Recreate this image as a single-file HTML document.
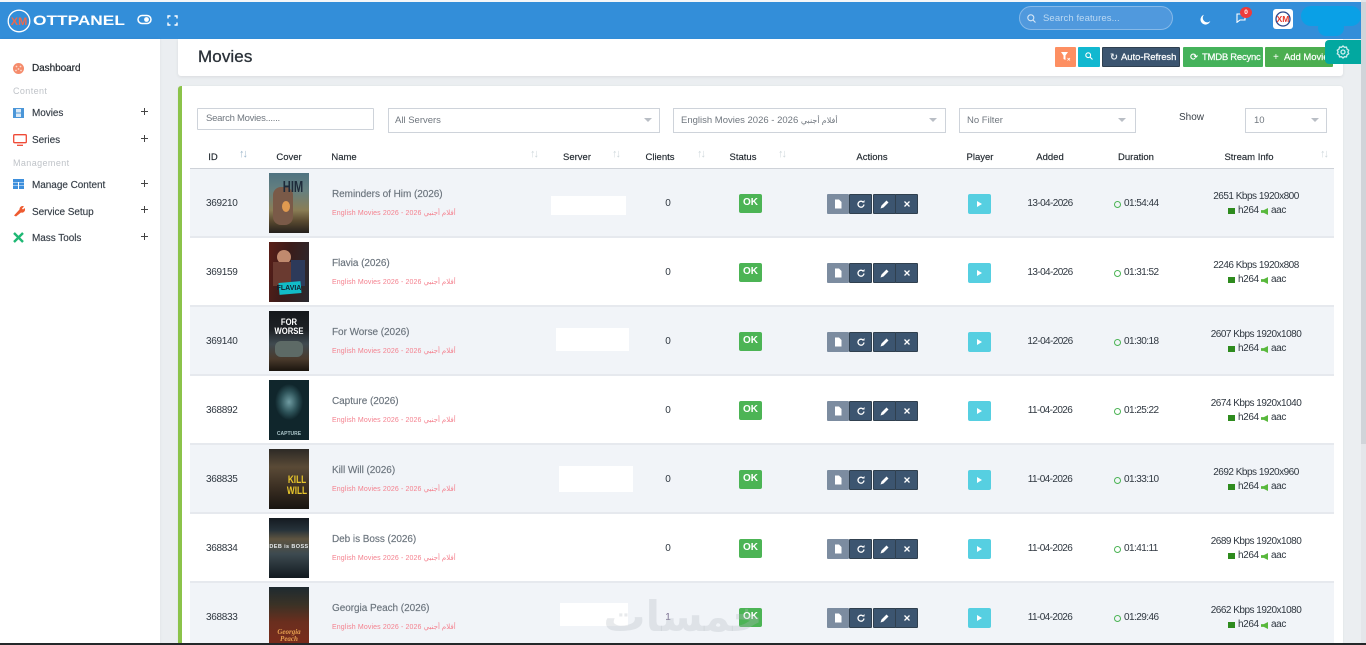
<!DOCTYPE html>
<html><head><meta charset="utf-8"><title>Movies</title>
<style>
*{box-sizing:border-box}
html,body{margin:0;padding:0;width:1366px;height:645px;overflow:hidden;background:#ebeef1;font-family:"Liberation Sans","DejaVu Sans",sans-serif;color:#2f3740}
.a,.a *{position:absolute}
.a{position:absolute}
.t{white-space:nowrap;font-size:10px;line-height:14px}
.nav{font-size:10px;color:#353d46;letter-spacing:-.05px;line-height:14px;white-space:nowrap;position:absolute;left:32px;margin-top:1px;-webkit-text-stroke:.15px #353d46}
.sec{font-size:9px;color:#bfc3c8;letter-spacing:.4px;position:absolute;left:13px;line-height:12px}
.plus{position:absolute;left:141px;width:7px;height:7px;background:linear-gradient(#444,#444) center/7px 1px no-repeat,linear-gradient(#444,#444) center/1px 7px no-repeat}
.inp{background:#fff;border:1px solid #ced3da;font-size:9.5px;color:#70777f;line-height:24px;padding-left:7px;white-space:nowrap}
.arr{width:0;height:0;border-left:4.5px solid transparent;border-right:4.5px solid transparent;border-top:4.5px solid #b9bec5}
.th{font-size:9.5px;color:#1f262d;line-height:14px;white-space:nowrap;top:151px;transform:translateX(-50%);-webkit-text-stroke:.15px #1f262d}
.sort{font-size:11px;color:#cfd8dc;top:148px;line-height:12px;letter-spacing:-2px}
.r{left:190px;width:1144px;height:69px;border-bottom:2px solid #e6e9ee;background:#fff}
.r.o{background:#f1f4f8}
.id{left:16px;top:28px;font-size:10px;line-height:14px;color:#2f3740;letter-spacing:-.3px}
.po{left:79px;top:4px;width:40px;height:60px;overflow:hidden}
.po b{font-family:"Liberation Sans",sans-serif;text-align:center;width:40px;left:0;line-height:1}
.nm{left:142px;top:19px;font-size:10px;line-height:14px;color:#6b747d;white-space:nowrap;letter-spacing:-.05px;-webkit-text-stroke:.15px #6b747d}
.ct{left:142px;top:39px;font-size:7px;line-height:12px;color:#f4828f;white-space:nowrap;letter-spacing:.12px}
.cl{left:474px;width:8px;top:28px;font-size:10px;line-height:14px;text-align:center}
.ok{left:549px;top:25px;width:23px;height:19px;background:#4cb455;border-radius:2px;color:#fff;font-size:10px;font-weight:bold;text-align:center;line-height:18px}
.b{top:25px;height:20px;background:#3c5570;border:1px solid #30404f;border-radius:1px}
.b svg{left:50%;top:50%;transform:translate(-50%,-50%)}
.b1{left:637px;width:22px;background:#7c8ca0;border-color:#7c8ca0}
.b2{left:659px;width:23px}
.b3{left:683px;width:23px}
.b4{left:705px;width:23px}
.pl{left:778px;top:25px;width:23px;height:20px;background:#56cfe1;border-radius:2px}
.pl i{left:9px;top:7px;width:0;height:0;border-left:5px solid #fff;border-top:3px solid transparent;border-bottom:3px solid transparent}
.ad{left:860px;width:0;top:28px;font-size:10px;line-height:14px;white-space:nowrap;display:flex;justify-content:center;letter-spacing:-.6px}
.du{left:924px;top:28px;font-size:10px;line-height:14px;white-space:nowrap;padding-left:10px;letter-spacing:-.55px}
.du i{left:0;top:4px;width:7px;height:7px;border:1px solid #4cb455;border-radius:50%}
.s1{left:1066px;width:0;top:21px;font-size:10px;line-height:14px;white-space:nowrap;display:flex;justify-content:center;letter-spacing:-.5px}
.s2{left:1038px;top:35px;font-size:10px;line-height:14px;white-space:nowrap;padding-left:10px;letter-spacing:-.4px}
.s2 i{left:0;top:4px;width:7px;height:6px;background:#2e8b1e}
.s2 em{left:33px;top:4px;width:7px;height:7px;background:#58b83c;clip-path:polygon(0 30%,40% 30%,100% 0,100% 100%,40% 70%,0 70%)}
.s2 u{left:43px;text-decoration:none;top:0}
.w{background:#fff}
.bt{font-size:9.5px;color:#fff;letter-spacing:-.05px;-webkit-text-stroke:.2px #fff;top:51px}
</style></head><body>
<div class="a" style="left:0;top:0;width:1366px;height:2px;background:#f4f6f8"></div>
<div class="a" style="left:0;top:2px;width:1361px;height:37px;background:#338ed9"></div>
<div class="a" style="left:1361px;top:0;width:5px;height:645px;background:#e4e6ea"></div>
<div class="a" style="left:1361px;top:2px;width:5px;height:442px;background:#d0d4d9"></div>

<svg class="a" style="left:7px;top:9px" width="24" height="24" viewBox="0 0 24 24"><circle cx="12" cy="12" r="10.800" fill="none" stroke="#fff" stroke-width="1.300"/><text x="12" y="16" text-anchor="middle" font-family="Liberation Sans" font-size="11" fill="#f0684a" font-weight="bold">XM</text></svg>
<div class="a t" style="left:33px;top:10px;font-size:14px;line-height:20px;font-weight:bold;color:#fff;letter-spacing:0;transform:scaleX(1.235);transform-origin:left">OTTPANEL</div>
<svg class="a" style="left:137px;top:14px" width="15" height="11" viewBox="0 0 15 11"><rect x="1" y="1.500" width="13" height="8" rx="4" fill="none" stroke="#fff" stroke-width="1.500"/><circle cx="9.500" cy="5.500" r="2.400" fill="#fff"/></svg>
<svg class="a" style="left:167px;top:15px" width="11" height="11" viewBox="0 0 11 11" fill="none" stroke="#fff" stroke-width="1.400"><path d="M1 3.500V1h2.500M7.500 1H10v2.500M10 7.500V10H7.500M3.500 10H1V7.500"/></svg>

<div class="a" style="left:1019px;top:6px;width:154px;height:24px;background:#5099dd;border:1px solid #86b9e8;border-radius:12px"></div>
<svg class="a" style="left:1027px;top:14px" width="9" height="9" viewBox="0 0 9 9" fill="none" stroke="#d5e6f6" stroke-width="1.100"><circle cx="3.800" cy="3.800" r="3"/><path d="M6 6l2.500 2.500"/></svg>
<div class="a t" style="left:1043px;top:12px;font-size:9.500px;color:#bcd9f3;letter-spacing:.1px">Search features...</div>
<svg class="a" style="left:1200px;top:14px" width="11" height="11" viewBox="0 0 11 11"><path d="M4 .8A5 5 0 1 0 10.300 7 4.300 4.300 0 0 1 4 .8z" fill="#fff"/></svg>
<svg class="a" style="left:1236px;top:13px" width="10" height="10" viewBox="0 0 10 10" fill="none" stroke="#fff" stroke-width="1.100"><path d="M1 1h8v6H4L1 9.300z"/></svg>
<div class="a" style="left:1240px;top:7px;width:12px;height:11px;background:#ee3b3b;border-radius:50%;color:#fff;font-size:6.500px;font-weight:bold;text-align:center;line-height:11px">0</div>
<div class="a" style="left:1273px;top:9px;width:20px;height:20px;background:#fff;border-radius:3px"></div>
<svg class="a" style="left:1273px;top:9px" width="20" height="20" viewBox="0 0 20 20"><circle cx="10" cy="10" r="7" fill="none" stroke="#29458c" stroke-width="1.300"/><text x="10" y="13" text-anchor="middle" font-family="Liberation Sans" font-size="8.500" font-weight="bold" fill="#e8392c">XM</text></svg>
<div class="a" style="left:1301px;top:6px;width:60px;height:20px;background:#0aa0e6;border-radius:10px"></div>
<div class="a" style="left:1318px;top:20px;width:26px;height:16px;background:#0aa0e6;border-radius:8px"></div>

<div class="a w" style="left:0;top:39px;width:160px;height:606px;box-shadow:0 0 3px rgba(0,0,0,.06)"></div>
<svg class="a" style="left:13px;top:63px" width="11" height="11" viewBox="0 0 11 11"><circle cx="5.500" cy="5.500" r="5.500" fill="#f58b6b"/><circle cx="3.500" cy="3.500" r=".9" fill="#fcd9cc"/><circle cx="7.500" cy="3.500" r=".9" fill="#fcd9cc"/><circle cx="5.500" cy="6" r=".9" fill="#fcd9cc"/><circle cx="3" cy="7.500" r=".9" fill="#fcd9cc"/><circle cx="8" cy="7.500" r=".9" fill="#fcd9cc"/></svg>
<div class="nav" style="top:61px;color:#23292f;-webkit-text-stroke:.2px #23292f">Dashboard</div>
<div class="sec" style="top:85px">Content</div>
<svg class="a" style="left:13px;top:108px" width="11" height="10" viewBox="0 0 11 10"><rect width="11" height="10" fill="#4b96d8"/><rect x="3" y="1" width="5" height="3.500" fill="#dbe9f6"/><rect x="3" y="5.500" width="5" height="3.500" fill="#dbe9f6"/></svg>
<div class="nav" style="top:106px">Movies</div><div class="plus" style="top:108px"></div>
<svg class="a" style="left:13px;top:134px" width="14" height="12" viewBox="0 0 14 12" fill="none" stroke="#ef4a36" stroke-width="1.300"><rect x=".7" y=".7" width="12.600" height="8" rx="1"/><path d="M4 11.300h6"/></svg>
<div class="nav" style="top:133px">Series</div><div class="plus" style="top:135px"></div>
<div class="sec" style="top:157px">Management</div>
<svg class="a" style="left:13px;top:179px" width="11" height="10" viewBox="0 0 11 10" fill="#3d8fdc"><rect width="11" height="3"/><rect y="3.500" width="5" height="3"/><rect x="6" y="3.500" width="5" height="3"/><rect y="7" width="5" height="3"/><rect x="6" y="7" width="5" height="3"/></svg>
<div class="nav" style="top:178px">Manage Content</div><div class="plus" style="top:180px"></div>
<svg class="a" style="left:13px;top:205px" width="12" height="12" viewBox="0 0 12 12"><path d="M1 10.500L6.500 4.500A3 3 0 0 1 11 1.500L9 3.500l1 1 1.500-1.500A3 3 0 0 1 8 7.500L3 11.500z" fill="#ee5b30"/></svg>
<div class="nav" style="top:205px">Service Setup</div><div class="plus" style="top:206px"></div>
<svg class="a" style="left:13px;top:232px" width="11" height="11" viewBox="0 0 11 11" fill="none" stroke="#1fb874" stroke-width="2.400"><path d="M1 1l9 9M10 1L1 10"/></svg>
<div class="nav" style="top:231px">Mass Tools</div><div class="plus" style="top:233px"></div>

<div class="a w" style="left:178px;top:39px;width:1165px;height:37px;box-shadow:0 1px 3px rgba(0,0,0,.08);border-radius:0 0 3px 3px"></div>
<div class="a t" style="left:198px;top:46px;font-size:17px;line-height:22px;color:#2a3138;letter-spacing:.1px;-webkit-text-stroke:.3px #2a3138">Movies</div>
<div class="a" style="left:1055px;top:47px;width:21px;height:20px;background:#fd8f62;border-radius:1px"></div>
<svg class="a" style="left:1061px;top:52px" width="10" height="9" viewBox="0 0 10 9"><path d="M0 0h7L4.500 3.500V8L2.500 7V3.500z" fill="#fff"/><path d="M6.500 6l2.500 2.500M9 6L6.500 8.500" stroke="#fff" stroke-width=".8"/></svg>
<div class="a" style="left:1078px;top:47px;width:22px;height:20px;background:#12b8d0;border-radius:1px"></div>
<svg class="a" style="left:1085px;top:52px" width="8" height="8" viewBox="0 0 8 8" fill="none" stroke="#fff" stroke-width="1.100"><circle cx="3.200" cy="3.200" r="2.400"/><path d="M5 5l2.500 2.500"/></svg>
<div class="a" style="left:1102px;top:47px;width:78px;height:20px;background:#3c5570;border:1px solid #2f4050;border-radius:1px"></div>
<div class="a" style="left:1183px;top:47px;width:80px;height:20px;background:#45b25b;border-radius:1px"></div>
<div class="a" style="left:1265px;top:47px;width:68px;height:20px;background:#4cae50;border-radius:1px"></div>
<div class="a t" style="left:1110px;top:51px;font-size:9.500px;color:#e8edf2;font-weight:bold">&#8635;</div>
<div class="a t bt" style="left:1121px">Auto-Refresh</div>
<div class="a t" style="left:1190px;top:51px;font-size:9.500px;color:#fff;font-weight:bold">&#10227;</div>
<div class="a t bt" style="left:1202px;letter-spacing:-.25px">TMDB Recync</div>
<div class="a t" style="left:1273px;top:51px;font-size:10px;color:#fff">+</div>
<div class="a t bt" style="left:1284px">Add Movie</div>
<div class="a" style="left:1325px;top:40px;width:36px;height:24px;background:#02a8a0;border-radius:4px 0 0 4px"></div>
<svg class="a" style="left:1336px;top:45px" width="14" height="14" viewBox="0 0 14 14" fill="none" stroke="#cfeeee" stroke-width="1.300"><path d="M7 1l1.500 1.300 2-.2.500 2 1.700 1.100-.8 1.800.8 1.800-1.700 1.100-.5 2-2-.2L7 13l-1.500-1.300-2 .2-.5-2L1.300 8.800l.8-1.800-.8-1.800L3 4.100l.5-2 2 .2z"/><circle cx="7" cy="7" r="2"/></svg>

<div class="a w" style="left:178px;top:86px;width:1165px;height:559px;border-radius:3px;box-shadow:0 0 2px rgba(0,0,0,.06)"></div>
<div class="a" style="left:178px;top:86px;width:4px;height:559px;background:#8bc34a;border-radius:3px 0 0 0"></div>

<div class="a inp" style="left:197px;top:108px;width:177px;height:22px;line-height:20px;border-radius:1px;padding-left:8px;letter-spacing:-.25px">Search Movies......</div>
<div class="a inp" style="left:388px;top:108px;width:272px;height:25px;padding-left:6px">All Servers</div><div class="a arr" style="left:644px;top:118px"></div>
<div class="a inp" style="left:673px;top:108px;width:273px;height:25px">English Movies 2026 - 2026 <span style="position:static;font-size:8px">أفلام أجنبي</span></div><div class="a arr" style="left:929px;top:118px"></div>
<div class="a inp" style="left:959px;top:108px;width:177px;height:25px">No Filter</div><div class="a arr" style="left:1118px;top:118px"></div>
<div class="a t" style="left:1179px;top:111px;font-size:10px;color:#3a4149">Show</div>
<div class="a inp" style="left:1245px;top:108px;width:82px;height:25px;padding-left:8px">10</div><div class="a arr" style="left:1311px;top:118px"></div>

<div class="a" style="left:0;top:0;width:1366px;height:645px">
<div class="th" style="left:213px">ID</div><div class="sort" style="left:239px;color:#9fb8cc">↑↓</div>
<div class="th" style="left:289px">Cover</div>
<div class="th" style="left:344px">Name</div><div class="sort" style="left:530px">↑↓</div>
<div class="th" style="left:577px">Server</div><div class="sort" style="left:612px">↑↓</div>
<div class="th" style="left:660px">Clients</div><div class="sort" style="left:697px">↑↓</div>
<div class="th" style="left:743px">Status</div><div class="sort" style="left:778px">↑↓</div>
<div class="th" style="left:872px">Actions</div>
<div class="th" style="left:980px">Player</div>
<div class="th" style="left:1050px">Added</div>
<div class="th" style="left:1136px">Duration</div>
<div class="th" style="left:1249px">Stream Info</div><div class="sort" style="left:1320px">↑↓</div>
</div>
<div class="a" style="left:190px;top:168px;width:1144px;height:2px;background:#ced2d8"></div>

<svg width="0" height="0" style="position:absolute"><defs>
<symbol id="doc" viewBox="0 0 8 9"><path d="M1 0h4l2.500 2.500V9H1z" fill="#fff"/></symbol>
<symbol id="ref" viewBox="0 0 8 8"><path d="M6.500 2.500A3 3 0 1 0 7 4.500" fill="none" stroke="#fff" stroke-width="1.300"/><path d="M5 2.500h2.500V0z" fill="#fff"/></symbol>
<symbol id="pen" viewBox="0 0 9 9"><path d="M0 9l1-3 5-5 2 2-5 5z" fill="#fff"/></symbol>
<symbol id="x" viewBox="0 0 7 7"><path d="M1 1l5 5M6 1L1 6" stroke="#fff" stroke-width="1.300"/></symbol>
</defs></svg>

<!-- row 1 -->
<div class="a r o" style="top:169px">
<div class="id">369210</div>
<div class="po" style="background:linear-gradient(#4f7381 0%,#66807f 30%,#8a7d55 62%,#5a4a30 80%,#241f1c 100%)"><div style="left:4px;top:14px;width:20px;height:38px;background:#7a5a48;border-radius:8px"></div><div style="left:13px;top:28px;width:8px;height:11px;background:#e09a50;border-radius:50%"></div><b style="top:7px;left:4px;font-size:16px;color:#1d2a3a;transform:scaleX(.7)">HIM</b></div>
<div class="nm">Reminders of Him (2026)</div><div class="ct">English Movies 2026 - 2026 أفلام أجنبي</div>
<div style="left:361px;top:27px;width:75px;height:19px;background:#fff"></div>
<div class="cl">0</div><div class="ok">OK</div>
<div class="b b1"><svg width="8" height="9"><use href="#doc"/></svg></div><div class="b b2"><svg width="8" height="8"><use href="#ref"/></svg></div><div class="b b3"><svg width="9" height="9"><use href="#pen"/></svg></div><div class="b b4"><svg width="7" height="7"><use href="#x"/></svg></div>
<div class="pl"><i></i></div>
<div class="ad"><span>13-04-2026</span></div><div class="du"><i></i>01:54:44</div>
<div class="s1"><span>2651 Kbps 1920x800</span></div><div class="s2"><i></i>h264<em></em><u>aac</u></div>
</div>
<!-- row 2 -->
<div class="a r" style="top:238px">
<div class="id">369159</div>
<div class="po" style="background:linear-gradient(100deg,#5a1e18 0%,#3a1c1a 45%,#2a2a30 100%)"><div style="left:8px;top:8px;width:14px;height:14px;background:#c08a6e;border-radius:50%"></div><div style="left:4px;top:20px;width:18px;height:24px;background:#6a3a30"></div><div style="left:22px;top:18px;width:14px;height:26px;background:#2d3a5a"></div><div style="left:10px;top:40px;width:22px;height:12px;background:#12bcc8;transform:rotate(-5deg)"></div><b style="top:43px;font-size:7px;color:#123">FLAVIA</b></div>
<div class="nm">Flavia (2026)</div><div class="ct">English Movies 2026 - 2026 أفلام أجنبي</div>
<div class="cl">0</div><div class="ok">OK</div>
<div class="b b1"><svg width="8" height="9"><use href="#doc"/></svg></div><div class="b b2"><svg width="8" height="8"><use href="#ref"/></svg></div><div class="b b3"><svg width="9" height="9"><use href="#pen"/></svg></div><div class="b b4"><svg width="7" height="7"><use href="#x"/></svg></div>
<div class="pl"><i></i></div>
<div class="ad"><span>13-04-2026</span></div><div class="du"><i></i>01:31:52</div>
<div class="s1"><span>2246 Kbps 1920x808</span></div><div class="s2"><i></i>h264<em></em><u>aac</u></div>
</div>
<!-- row 3 -->
<div class="a r o" style="top:307px">
<div class="id">369140</div>
<div class="po" style="background:linear-gradient(#15181c 0%,#1d2024 30%,#3f4a50 55%,#4a3a2c 80%,#1a140e 100%)"><b style="top:7px;font-size:9px;color:#fff;transform:scaleX(.85)">FOR<br>WORSE</b><div style="left:6px;top:30px;width:28px;height:16px;background:#5d6a66;border-radius:6px"></div></div>
<div class="nm">For Worse (2026)</div><div class="ct">English Movies 2026 - 2026 أفلام أجنبي</div>
<div style="left:366px;top:21px;width:73px;height:23px;background:#fff"></div>
<div class="cl">0</div><div class="ok">OK</div>
<div class="b b1"><svg width="8" height="9"><use href="#doc"/></svg></div><div class="b b2"><svg width="8" height="8"><use href="#ref"/></svg></div><div class="b b3"><svg width="9" height="9"><use href="#pen"/></svg></div><div class="b b4"><svg width="7" height="7"><use href="#x"/></svg></div>
<div class="pl"><i></i></div>
<div class="ad"><span>12-04-2026</span></div><div class="du"><i></i>01:30:18</div>
<div class="s1"><span>2607 Kbps 1920x1080</span></div><div class="s2"><i></i>h264<em></em><u>aac</u></div>
</div>
<!-- row 4 -->
<div class="a r" style="top:376px">
<div class="id">368892</div>
<div class="po" style="background:radial-gradient(ellipse 14px 18px at 20px 22px,#6f9ca2 0%,#2d5258 60%,#10262c 100%) #0e2228"><b style="top:52px;font-size:5px;color:#a9c4c8">CAPTURE</b></div>
<div class="nm">Capture (2026)</div><div class="ct">English Movies 2026 - 2026 أفلام أجنبي</div>
<div class="cl">0</div><div class="ok">OK</div>
<div class="b b1"><svg width="8" height="9"><use href="#doc"/></svg></div><div class="b b2"><svg width="8" height="8"><use href="#ref"/></svg></div><div class="b b3"><svg width="9" height="9"><use href="#pen"/></svg></div><div class="b b4"><svg width="7" height="7"><use href="#x"/></svg></div>
<div class="pl"><i></i></div>
<div class="ad"><span>11-04-2026</span></div><div class="du"><i></i>01:25:22</div>
<div class="s1"><span>2674 Kbps 1920x1040</span></div><div class="s2"><i></i>h264<em></em><u>aac</u></div>
</div>
<!-- row 5 -->
<div class="a r o" style="top:445px">
<div class="id">368835</div>
<div class="po" style="background:linear-gradient(#2d2a26 0%,#5a4a36 30%,#3a2e22 65%,#181410 100%)"><b style="top:26px;left:8px;font-size:11px;color:#e8c62c;transform:scaleX(.75)">KILL<br>WILL</b></div>
<div class="nm">Kill Will (2026)</div><div class="ct">English Movies 2026 - 2026 أفلام أجنبي</div>
<div style="left:369px;top:21px;width:74px;height:26px;background:#fff"></div>
<div class="cl">0</div><div class="ok">OK</div>
<div class="b b1"><svg width="8" height="9"><use href="#doc"/></svg></div><div class="b b2"><svg width="8" height="8"><use href="#ref"/></svg></div><div class="b b3"><svg width="9" height="9"><use href="#pen"/></svg></div><div class="b b4"><svg width="7" height="7"><use href="#x"/></svg></div>
<div class="pl"><i></i></div>
<div class="ad"><span>11-04-2026</span></div><div class="du"><i></i>01:33:10</div>
<div class="s1"><span>2692 Kbps 1920x960</span></div><div class="s2"><i></i>h264<em></em><u>aac</u></div>
</div>
<!-- row 6 -->
<div class="a r" style="top:514px">
<div class="id">368834</div>
<div class="po" style="background:linear-gradient(#141a20 0%,#26323a 20%,#5e5440 35%,#3d4a50 60%,#121a20 100%)"><b style="top:27px;font-size:5.500px;color:#e4e8ea;letter-spacing:.4px">DEB is BOSS</b></div>
<div class="nm">Deb is Boss (2026)</div><div class="ct">English Movies 2026 - 2026 أفلام أجنبي</div>
<div class="cl">0</div><div class="ok">OK</div>
<div class="b b1"><svg width="8" height="9"><use href="#doc"/></svg></div><div class="b b2"><svg width="8" height="8"><use href="#ref"/></svg></div><div class="b b3"><svg width="9" height="9"><use href="#pen"/></svg></div><div class="b b4"><svg width="7" height="7"><use href="#x"/></svg></div>
<div class="pl"><i></i></div>
<div class="ad"><span>11-04-2026</span></div><div class="du"><i></i>01:41:11</div>
<div class="s1"><span>2689 Kbps 1920x1080</span></div><div class="s2"><i></i>h264<em></em><u>aac</u></div>
</div>
<!-- row 7 -->
<div class="a r o" style="top:583px;height:62px;border-bottom:0">
<div class="id">368833</div>
<div class="po" style="background:linear-gradient(#1e2a30 0%,#3a3226 30%,#6a2e1e 60%,#7a2c1c 100%);height:58px"><b style="top:42px;font-size:7px;color:#e8a050;font-style:italic;font-family:'Liberation Serif',serif">Georgia<br>Peach</b></div>
<div class="nm">Georgia Peach (2026)</div><div class="ct">English Movies 2026 - 2026 أفلام أجنبي</div>
<div style="left:370px;top:20px;width:68px;height:23px;background:#fff"></div>
<div class="cl" style="color:#7a6f90">1</div><div class="ok">OK</div>
<div class="b b1"><svg width="8" height="9"><use href="#doc"/></svg></div><div class="b b2"><svg width="8" height="8"><use href="#ref"/></svg></div><div class="b b3"><svg width="9" height="9"><use href="#pen"/></svg></div><div class="b b4"><svg width="7" height="7"><use href="#x"/></svg></div>
<div class="pl"><i></i></div>
<div class="ad"><span>11-04-2026</span></div><div class="du"><i></i>01:29:46</div>
<div class="s1"><span>2662 Kbps 1920x1080</span></div><div class="s2"><i></i>h264<em></em><u>aac</u></div>
</div>

<div class="a t" style="left:600px;top:592px;width:166px;font-size:42px;line-height:50px;font-family:'DejaVu Sans',sans-serif;font-weight:bold;color:rgba(180,186,192,.3);text-align:center">خمسات</div>
<div class="a" style="left:0;top:643px;width:1366px;height:2px;background:#24282a"></div>
</body></html>
